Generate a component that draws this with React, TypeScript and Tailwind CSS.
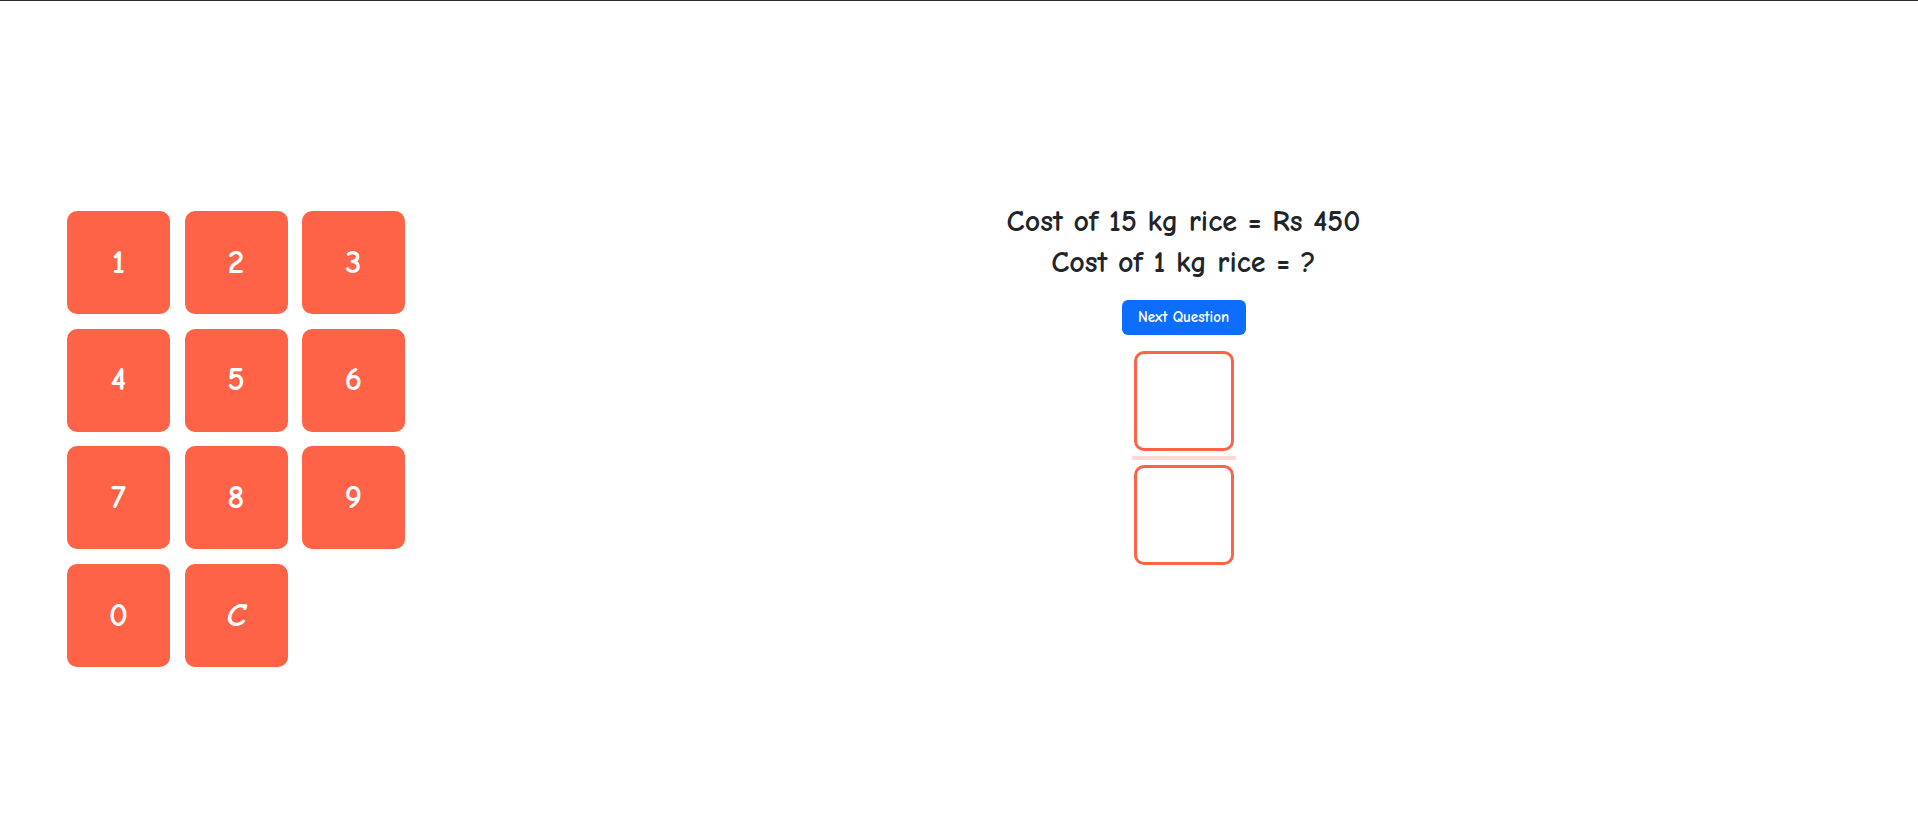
const KEYS = ["1", "2", "3", "4", "5", "6", "7", "8", "9", "0", "C"];

const FONT = "font-['Comic_Sans_MS','Comic_Neue','Noto_Sans',sans-serif]";

function Keypad() {
  return (
    <div className="grid grid-cols-[repeat(3,103px)] auto-rows-[103px] gap-x-[14.5px] gap-y-[14.7px]">
      {KEYS.map((k) => (
        <button
          key={k}
          className={`flex items-center justify-center rounded-[10px] bg-[#ff6347] text-[33px] font-bold text-white ${
            k === "C" ? "italic" : ""
          }`}
        >
          {k}
        </button>
      ))}
    </div>
  );
}

function AnswerBox() {
  return <div className="h-[100px] w-[100px] rounded-[10px] border-[3px] border-[#ff6347] bg-white" />;
}

export default function App() {
  return (
    <div className={`min-h-screen border-t border-[#2a2a2a] bg-white ${FONT} text-[#212529]`}>
      <div className="flex">
        {/* keypad */}
        <div className="w-[449px] shrink-0 pl-[67px] pt-[210px]">
          <Keypad />
        </div>

        {/* question + answer */}
        <div className="flex flex-1 flex-col items-center pt-[200px]">
          <p className="text-[30px] font-bold leading-[41px]">Cost of 15 kg rice = Rs 450</p>
          <p className="text-[30px] font-bold leading-[41px]">Cost of 1 kg rice = ?</p>
          <button className="mt-[17px] h-[35px] w-[124px] rounded-[6px] bg-[#0d6efd] text-[15px] font-bold text-white">
            Next Question
          </button>
          <div className="mt-[16px] flex flex-col items-center">
            <AnswerBox />
            <div className="my-[5px] h-[4px] w-[104px] bg-[#ffd8d1]" />
            <AnswerBox />
          </div>
        </div>
      </div>
    </div>
  );
}
